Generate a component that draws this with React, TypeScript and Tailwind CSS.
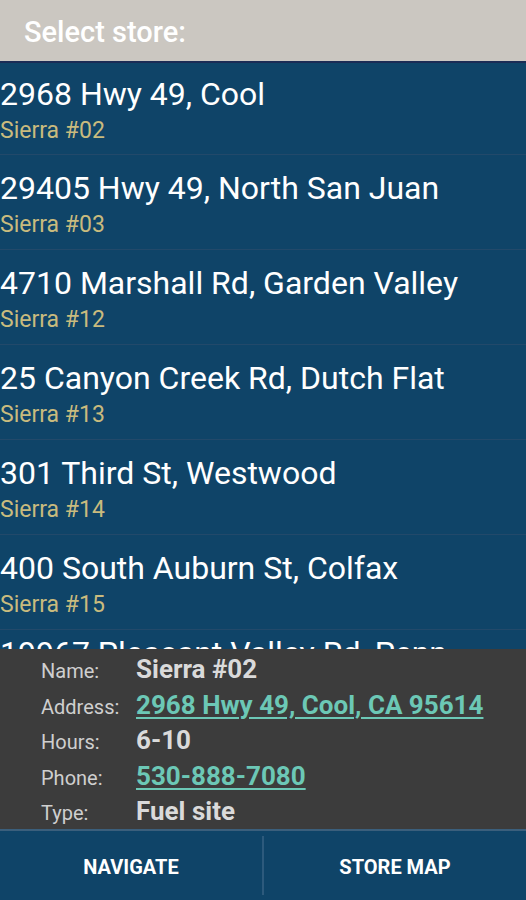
const stores = [
  { address: '2968 Hwy 49, Cool', name: 'Sierra #02' },
  { address: '29405 Hwy 49, North San Juan', name: 'Sierra #03' },
  { address: '4710 Marshall Rd, Garden Valley', name: 'Sierra #12' },
  { address: '25 Canyon Creek Rd, Dutch Flat', name: 'Sierra #13' },
  { address: '301 Third St, Westwood', name: 'Sierra #14' },
  { address: '400 South Auburn St, Colfax', name: 'Sierra #15' },
  { address: '19967 Pleasant Valley Rd, Penn Valley', name: 'Sierra #16' },
];

const details = [
  { label: 'Name:', value: 'Sierra #02' },
  { label: 'Address:', value: '2968 Hwy 49, Cool, CA 95614', link: true },
  { label: 'Hours:', value: '6-10' },
  { label: 'Phone:', value: '530-888-7080', link: true },
  { label: 'Type:', value: 'Fuel site' },
];

export default function App() {
  return (
    <div
      className="flex h-[900px] w-[526px] flex-col overflow-hidden bg-[#0f4468]"
      style={{ fontFamily: 'Roboto, "Liberation Sans", sans-serif' }}
    >
      <div className="h-[63px] shrink-0 border-b-2 border-[#1b2c55] bg-[#cbc7c1] pl-6 pt-[15px]">
        <span className="text-[29px] font-medium leading-[34px] text-white">Select store:</span>
      </div>

      {/* list continues under the detail panel */}
      <div className="h-[586px] shrink-0 overflow-hidden">
        {stores.map((s, i) => (
          <div
            key={s.name}
            className={
              i === 0
                ? 'flex h-[92px] flex-col border-b border-[#22496a] pt-[10px]'
                : i === stores.length - 1
                  ? 'flex flex-col pt-[2px]'
                  : 'flex h-[95px] flex-col border-b border-[#22496a] pt-[12px]'
            }
          >
            <div className="text-[32px] leading-[42px] text-white">{s.address}</div>
            <div className="text-[23px] leading-[31px] text-[#c9bb7e]">{s.name}</div>
          </div>
        ))}
      </div>

      <div className="h-[180px] shrink-0 overflow-hidden bg-[#3c3c3c] pt-[3px]">
        {details.map((d) => (
          <div key={d.label} className="flex h-[35.5px] items-baseline">
            <span className="w-[136px] shrink-0 pl-[41px] text-[20px] leading-[35.5px] text-[#cfcfcf]">
              {d.label}
            </span>
            <span
              className={
                d.link
                  ? 'whitespace-nowrap text-[26px] font-bold leading-[35.5px] text-[#6cc8b6] underline decoration-2 underline-offset-[3px]'
                  : 'whitespace-nowrap text-[26px] font-bold leading-[35.5px] text-[#dadada]'
              }
            >
              {d.value}
            </span>
          </div>
        ))}
      </div>

      <div className="flex flex-1 items-center border-t-2 border-[#3b5f7c] bg-[#0f4468]">
        <button className="flex h-full flex-1 items-center justify-center pt-[2px] text-[20px] font-bold text-white">
          NAVIGATE
        </button>
        <div className="h-[59px] w-[2px] bg-[#2d5a7c]" />
        <button className="flex h-full flex-1 items-center justify-center pt-[2px] text-[20px] font-bold text-white">
          STORE MAP
        </button>
      </div>
    </div>
  );
}
